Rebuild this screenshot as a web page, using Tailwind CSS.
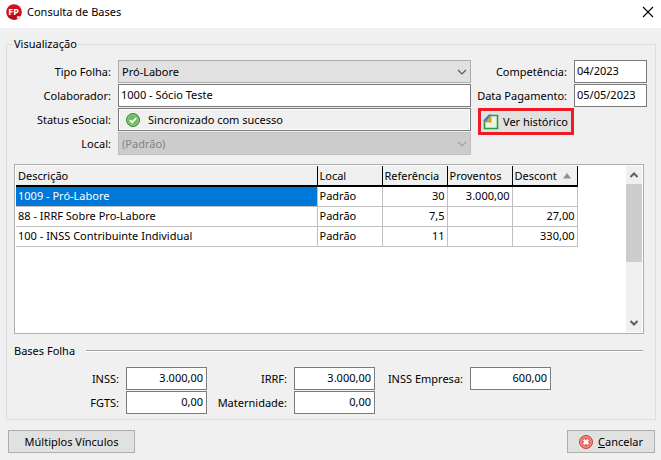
<!DOCTYPE html>
<html lang="pt-BR">
<head>
  <meta charset="UTF-8">
  <meta name="viewport" content="width=device-width, initial-scale=1.0">
  <title>Consulta de Bases</title>
  <script src="https://cdn.jsdelivr.net/npm/@tailwindcss/browser@4"></script>
</head>
<body class="min-h-screen bg-[#f0f0f0] font-['Noto_Sans','Open_Sans',sans-serif] text-[11px] leading-4 text-black">
  <!-- title bar -->
  <header class="flex h-7 items-center bg-white pl-1.5 pr-[7px] pb-1">
    <svg class="size-4" viewBox="0 0 16 16">
      <circle cx="8" cy="8" r="7.8" fill="#d3101f" />
      <path d="M1.500 12a7.800 7.800 0 0 0 12 1.500L15 10z" fill="#b00d1b" />
      <text x="7.500" y="10.500" text-anchor="middle" font-size="9" font-weight="700" fill="#fff">FP</text>
      <circle cx="12.500" cy="13.500" r="1.800" fill="#e9c4c8" />
    </svg>
    <h1 class="ml-[5px] flex-1">Consulta de Bases</h1>
    <button type="button" aria-label="Fechar">
      <svg class="size-3" viewBox="0 0 12 12" fill="none" stroke="#000" stroke-width="1.1"><path d="M1 1l10 10M11 1L1 11" /></svg>
    </button>
  </header>

  <main class="pt-2">
    <fieldset class="ml-1.5 mr-[5px] border border-[#dcdcdc] pl-[7px] pr-2 pt-2 pb-[5px]">
      <legend class="ml-[-1px] px-px">Visualização</legend>

      <div class="flex gap-[7px]">
        <div class="grid flex-1 grid-cols-[97px_1fr] items-center gap-x-[7px] gap-y-px">
          <label for="tipo" class="text-right">Tipo Folha:</label>
          <div class="relative">
            <select id="tipo" class="block h-[23px] w-full appearance-none border border-[#adadad] bg-[#e1e1e1] px-[3px]">
              <option>Pró-Labore</option>
            </select>
            <svg class="pointer-events-none absolute top-2 right-1 h-2 w-2.5" viewBox="0 0 10 8" fill="none" stroke="#555" stroke-width="1.1"><path d="M1 2l4 4 4-4" /></svg>
          </div>

          <label for="colaborador" class="text-right">Colaborador:</label>
          <input id="colaborador" type="text" value="1000 - Sócio Teste" class="h-[23px] w-full border border-[#7a7a7a] bg-white px-0.5 pb-0.5">

          <span id="status-label" class="text-right">Status eSocial:</span>
          <div aria-labelledby="status-label" class="flex h-[23px] items-center gap-2 border border-[#7a7a7a] pl-[7px] shadow-[inset_0_0_0_1px_#fff]">
            <svg class="size-3.5" viewBox="0 0 14 14">
              <circle cx="7" cy="7" r="6.500" fill="#4ca845" stroke="#3c8c38" />
              <circle cx="7" cy="7" r="5.300" fill="#6cba60" stroke="#a9dba0" stroke-width=".7" />
              <path d="M4 7.200l2.200 2.200L10.200 5" fill="none" stroke="#fff" stroke-width="1.900" />
            </svg>
            <span>Sincronizado com sucesso</span>
          </div>

          <label for="local" class="text-right">Local:</label>
          <div class="relative">
            <select id="local" disabled class="block h-[23px] w-full appearance-none border border-[#bfbfbf] bg-[#cccccc] px-[3px] text-[#838383] opacity-100">
              <option>(Padrão)</option>
            </select>
            <svg class="pointer-events-none absolute top-2 right-1 h-2 w-2.5" viewBox="0 0 10 8" fill="none" stroke="#a0a0a0" stroke-width="1.1"><path d="M1 2l4 4 4-4" /></svg>
          </div>
        </div>

        <div class="flex w-[169px] flex-col gap-px">
          <div class="flex items-center justify-end gap-[7px]">
            <label for="competencia">Competência:</label>
            <input id="competencia" type="text" value="04/2023" class="h-[23px] w-[73px] border border-[#7a7a7a] bg-white px-0.5 pb-0.5">
          </div>
          <div class="flex items-center justify-end gap-[7px]">
            <label for="pagamento" class="whitespace-nowrap">Data Pagamento:</label>
            <input id="pagamento" type="text" value="05/05/2023" class="h-[23px] w-[73px] border border-[#7a7a7a] bg-white px-0.5 pb-0.5">
          </div>
          <button type="button" class="flex h-[27px] w-24 items-center gap-1 border-3 border-[#ed1c24] bg-[#e1e1e1] pl-0.5 whitespace-nowrap">
            <svg class="size-4 shrink-0" viewBox="0 0 16 16">
              <path d="M6 1.500h8.500v13h-13V7z" fill="#eaf6e0" stroke="#2f9a45" stroke-width="1.600" />
              <path d="M1 8.500L8.500 1v7.500z" fill="#dfa032" />
              <path d="M0 6.500L6 .500h2.500L3 7.500z" fill="#2f86c8" />
            </svg>
            <span>Ver histórico</span>
          </button>
        </div>
      </div>

      <!-- events table -->
      <div class="mt-[9px] mr-[3px] flex h-[170px] border border-[#adadad] bg-white p-px">
        <div class="flex-1">
          <table class="w-[561px] table-fixed border-collapse">
            <thead>
              <tr class="h-5 bg-[#f0f0f0] text-left [&>th]:overflow-hidden [&>th]:border-r [&>th]:border-b-2 [&>th]:border-black [&>th]:px-0.5 [&>th]:font-normal">
                <th class="w-[301px]">Descrição</th>
                <th class="w-[65px]">Local</th>
                <th class="w-[65px]">Referência</th>
                <th class="w-[65px]">Proventos</th>
                <th class="w-[65px]">
                  <div class="flex items-center justify-between pr-1">Descont
                    <svg class="h-1.5 w-2" viewBox="0 0 8 6"><path d="M4 0l4 5.500H0z" fill="#909090" /></svg>
                  </div>
                </th>
              </tr>
            </thead>
            <tbody class="[&_td]:h-5 [&_td]:border-r [&_td]:border-b [&_td]:border-[#c0c0c0] [&_td]:px-0.5 [&_td:nth-child(n+3)]:text-right">
              <tr><td class="bg-[#0078d7] text-white">1009 - Pró-Labore</td><td>Padrão</td><td>30</td><td>3.000,00</td><td></td></tr>
              <tr><td>88 - IRRF Sobre Pro-Labore</td><td>Padrão</td><td>7,5</td><td></td><td>27,00</td></tr>
              <tr><td>100 - INSS Contribuinte Individual</td><td>Padrão</td><td>11</td><td></td><td>330,00</td></tr>
            </tbody>
          </table>
        </div>
        <div class="flex w-4 flex-col items-center bg-[#f0f0f0]">
          <svg class="my-1.5 h-1.5 w-2" viewBox="0 0 8 6" fill="none" stroke="#606060" stroke-width="2"><path d="M.500 5L4 1.500 7.500 5" /></svg>
          <div class="h-[78px] w-full bg-[#cdcdcd]"></div>
          <svg class="mt-auto mb-1.5 h-1.5 w-2" viewBox="0 0 8 6" fill="none" stroke="#606060" stroke-width="2"><path d="M.500 1L4 4.500 7.500 1" /></svg>
        </div>
      </div>

      <div class="mt-[9px] mr-1 flex items-center gap-[11px]">
        <h2>Bases Folha</h2>
        <div class="h-0.5 flex-1 border-t border-b border-t-[#a0a0a0] border-b-white"></div>
      </div>

      <div class="mt-2 grid grid-cols-[105px_81px_73px_81px_81px_81px] items-center gap-x-[7px] gap-y-px text-right whitespace-nowrap [&>label]:justify-self-end [&>input]:h-[23px] [&>input]:w-full [&>input]:border [&>input]:border-[#7a7a7a] [&>input]:bg-white [&>input]:px-[3px] [&>input]:pb-0.5 [&>input]:text-right">
        <label for="inss">INSS:</label>
        <input id="inss" type="text" value="3.000,00">
        <label for="irrf">IRRF:</label>
        <input id="irrf" type="text" value="3.000,00">
        <label for="empresa">INSS Empresa:</label>
        <input id="empresa" type="text" value="600,00">
        <label for="fgts">FGTS:</label>
        <input id="fgts" type="text" value="0,00">
        <label for="maternidade">Maternidade:</label>
        <input id="maternidade" type="text" value="0,00">
      </div>
    </fieldset>

    <div class="flex justify-between pt-2.5 pr-1.5 pl-2">
      <button type="button" class="h-[23px] w-[127px] border border-[#adadad] bg-[#e1e1e1]">Múltiplos Vínculos</button>
      <button type="button" class="flex h-[23px] w-[88px] items-center justify-center gap-[5px] border border-[#adadad] bg-[#e1e1e1]">
        <svg class="size-3.5" viewBox="0 0 14 14">
          <circle cx="7" cy="7" r="6.500" fill="#e2574c" stroke="#c9443c" />
          <circle cx="7" cy="7" r="5.300" fill="#e8695f" stroke="#f5b5ae" stroke-width=".8" />
          <path d="M4.700 4.700l4.600 4.600M9.300 4.700L4.700 9.300" stroke="#fff" stroke-width="2.200" />
        </svg>
        <span><u>C</u>ancelar</span>
      </button>
    </div>
  </main>
</body>
</html>
